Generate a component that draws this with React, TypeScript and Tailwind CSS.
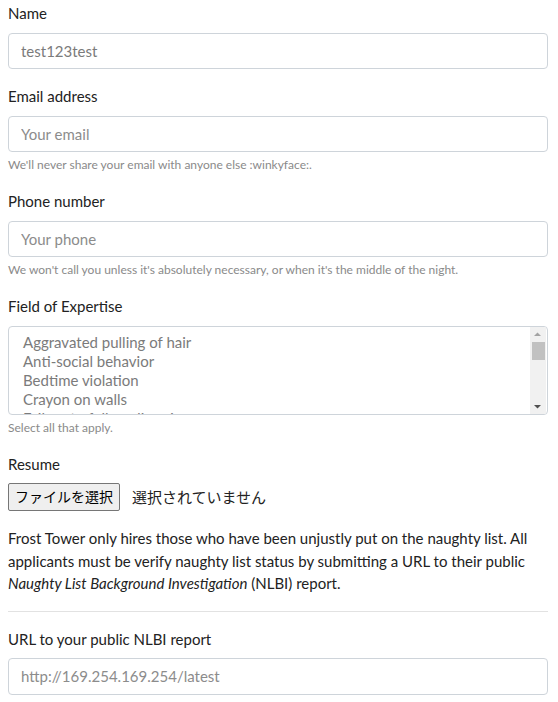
const font = { fontFamily: 'Lato, "Noto Sans CJK JP", sans-serif' };

const expertise = [
  "Aggravated pulling of hair",
  "Anti-social behavior",
  "Bedtime violation",
  "Crayon on walls",
  "Failure to follow directions",
];

function Label({ children }: { children: React.ReactNode }) {
  return <label className="block mb-2 text-[15px] leading-[22.5px] text-[#222]">{children}</label>;
}

function TextInput({ value, placeholder }: { value?: string; placeholder?: string }) {
  return (
    <input
      readOnly
      value={value}
      placeholder={placeholder}
      className="block w-full h-[36.5px] px-3 border border-[#ced4da] rounded-[4px] bg-white text-[15px] text-[#7b7b7b] placeholder:text-[#8c8c8c] outline-none"
      style={font}
    />
  );
}

function Help({ children }: { children: React.ReactNode }) {
  return <small className="block mt-1 text-[12px] leading-[18px] text-[#8a8a8a]">{children}</small>;
}

function ExpertiseList() {
  return (
    <div className="flex h-[89px] border border-[#ced4da] rounded-[4px] bg-white overflow-hidden">
      <div className="flex-1 pt-[6px] pl-[14px] overflow-hidden">
        {expertise.map((item) => (
          <div key={item} className="h-[19px] leading-[18px] text-[15px] text-[#7b7b7b] whitespace-nowrap">
            {item}
          </div>
        ))}
      </div>
      <div className="flex flex-col items-center w-[16px] bg-[#f1f1f1] mr-[1px]">
        <svg width="16" height="15" viewBox="0 0 16 15" className="shrink-0">
          <path d="M4 9h7L7.5 5.5z" fill="#a3a3a3" />
        </svg>
        <div className="w-[13px] h-[18px] bg-[#c1c1c1]" />
        <div className="flex-1" />
        <svg width="16" height="15" viewBox="0 0 16 15" className="shrink-0">
          <path d="M4 6h7l-3.5 3.5z" fill="#505050" />
        </svg>
      </div>
    </div>
  );
}

export default function App() {
  return (
    <div className="bg-white min-h-[702px] pl-2 pr-[10px] pt-[2px] text-[#222]" style={font}>
      <div className="mb-4">
        <Label>Name</Label>
        <TextInput value="test123test" />
      </div>

      <div className="mb-4">
        <Label>Email address</Label>
        <TextInput placeholder="Your email" />
        <Help>We'll never share your email with anyone else :winkyface:.</Help>
      </div>

      <div className="mb-4">
        <Label>Phone number</Label>
        <TextInput placeholder="Your phone" />
        <Help>We won't call you unless it's absolutely necessary, or when it's the middle of the night.</Help>
      </div>

      <div className="mb-4">
        <Label>Field of Expertise</Label>
        <ExpertiseList />
        <Help>Select all that apply.</Help>
      </div>

      <div className="mb-4">
        <Label>Resume</Label>
        <div className="flex items-center mt-[1px]">
          <button className="h-[28px] px-[6px] border border-[#767676] rounded-[2px] bg-[#efefef] text-[14px] text-black leading-none">
            ファイルを選択
          </button>
          <span className="ml-[12px] text-[15px] text-[#222]">選択されていません</span>
        </div>
      </div>

      <p className="text-[15px] leading-[22.5px] text-[#222]">
        Frost Tower only hires those who have been unjustly put on the naughty list. All applicants must be verify
        naughty list status by submitting a URL to their public <em>Naughty List Background Investigation</em> (NLBI)
        report.
      </p>

      <hr className="my-4 border-t border-[#e2e2e2]" />

      <div className="mb-4">
        <Label>URL to your public NLBI report</Label>
        <TextInput placeholder="http://169.254.169.254/latest" />
      </div>
    </div>
  );
}
